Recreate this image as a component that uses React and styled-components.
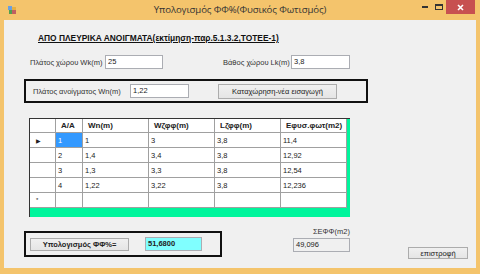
import React from 'react';
import styled, { createGlobalStyle } from 'styled-components';

const GlobalStyle = createGlobalStyle`
  * { margin: 0; padding: 0; box-sizing: border-box; }
  html, body { width: 480px; height: 274px; overflow: hidden; }
  body { font-family: "Liberation Sans", "DejaVu Sans", sans-serif; color: #222; }
`;

const Window = styled.div`
  width: 480px;
  height: 274px;
  background: #f4c46c;
  display: flex;
  flex-direction: column;
`;

const TitleBar = styled.div`
  height: 20px;
  display: grid;
  grid-template-columns: 1fr auto 1fr;
  align-items: start;
`;

const Title = styled.div`
  font-family: "Open Sans", "Noto Sans", sans-serif;
  font-size: 9.6px;
  letter-spacing: -0.1px;
  line-height: 20px;
  color: #333;
`;

const Controls = styled.div`
  display: flex;
  justify-content: flex-end;
  align-items: flex-start;
  padding-right: 5px;
`;

const CtrlBtn = styled.div`
  width: ${p => p.w || 14}px;
  height: 14px;
  display: flex;
  align-items: center;
  justify-content: center;
  background: ${p => p.close ? '#c75050' : 'transparent'};
`;

const Client = styled.div`
  flex: 1;
  margin: 0 4px 6px 4px;
  background: #f0f0f0;
  display: flex;
  flex-direction: column;
  padding-top: 13px;
`;

const Heading = styled.div`
  margin-left: 34px;
  font-size: 8.4px;
  font-weight: bold;
  line-height: 10px;
  text-decoration: underline;
  color: #111;
`;

const Row = styled.div`
  display: flex;
  align-items: center;
  margin-top: ${p => p.mt || 0}px;
  margin-left: ${p => p.ml || 0}px;
`;

const Label = styled.span`
  font-size: 7.5px;
  width: ${p => p.w}px;
  margin-left: ${p => p.ml || 0}px;
  white-space: nowrap;
  color: #333;
`;

const TextBox = styled.div`
  width: ${p => p.w}px;
  height: 14px;
  margin-left: ${p => p.ml || 0}px;
  background: ${p => p.bg || '#fff'};
  border: 1px solid #abadb3;
  font-size: 7.5px;
  font-weight: ${p => p.bold ? 'bold' : 'normal'};
  line-height: 12px;
  padding-left: 2px;
  color: #222;
`;

const Button = styled.div`
  width: ${p => p.w}px;
  height: ${p => p.h || 14}px;
  margin-left: ${p => p.ml || 0}px;
  margin-top: ${p => p.mt || 0}px;
  border: 1px solid #acacac;
  background: linear-gradient(#f0f0f0, #e5e5e5);
  font-size: 7.5px;
  font-weight: ${p => p.bold ? 'bold' : 'normal'};
  display: flex;
  align-items: center;
  justify-content: center;
  color: #222;
`;

const FrameBox = styled.div`
  border: 2px solid #111;
  width: ${p => p.w}px;
  height: ${p => p.h}px;
  margin-left: 20px;
  margin-top: ${p => p.mt || 0}px;
  display: flex;
  align-items: center;
  padding-left: ${p => p.pl || 0}px;
`;

const Grid = styled.div`
  margin: 15px 0 0 25px;
  width: 321px;
  height: 99px;
  background: #00f59c;
  border-top: 1px solid #333;
  border-left: 1px solid #333;
`;

const GridTable = styled.div`
  display: grid;
  grid-template-columns: 26px 27px 66px 66px 66px 66px;
  grid-auto-rows: 15px;
  grid-template-rows: 14px;
  background: #fff;
  width: 317px;
`;

const Cell = styled.div`
  border-right: 1px solid #a0a0a0;
  border-bottom: 1px solid #a0a0a0;
  font-size: ${p => p.head ? 8 : 7.5}px;
  font-weight: ${p => p.head ? 'bold' : 'normal'};
  padding-left: ${p => p.head ? 5 : 2}px;
  display: flex;
  align-items: center;
  background: ${p => p.sel ? '#3399ff' : '#fff'};
  color: ${p => p.sel ? '#fff' : '#222'};
  white-space: nowrap;
`;

const RowHead = styled(Cell)`
  padding-left: 6px;
  font-size: 6px;
`;

const BottomRow = styled.div`
  display: flex;
  align-items: flex-start;
  margin-top: 10px;
`;

const SumCol = styled.div`
  display: flex;
  flex-direction: column;
  align-items: flex-end;
  margin-left: 71px;
  gap: 2px;
`;

const rows = [
  ['1', '1', '3', '3,8', '11,4'],
  ['2', '1,4', '3,4', '3,8', '12,92'],
  ['3', '1,3', '3,3', '3,8', '12,54'],
  ['4', '1,22', '3,22', '3,8', '12,236'],
];

const headers = ['A/A', 'Wn(m)', 'Wζφφ(m)', 'Lζφφ(m)', 'Εφυσ.φωτ(m2)'];

const AppIcon = () => (
  <svg width="8" height="8" viewBox="0 0 8 8" style={{ margin: '6px 0 0 8px' }}>
    <rect x="0" y="0" width="4" height="4" fill="#6aa0e0" />
    <rect x="4" y="1" width="4" height="3" fill="#e8b040" />
    <rect x="1" y="4" width="3" height="4" fill="#50a050" />
    <rect x="4" y="4" width="4" height="4" fill="#c06060" />
  </svg>
);

export default function App() {
  return (
    <Window>
      <GlobalStyle />
      <TitleBar>
        <AppIcon />
        <Title>Υπολογισμός ΦΦ%(Φυσικός Φωτισμός)</Title>
        <Controls>
          <CtrlBtn w={14}>
            <svg width="6" height="2"><rect width="6" height="2" fill="#333" /></svg>
          </CtrlBtn>
          <CtrlBtn w={14}>
            <svg width="8" height="6"><rect x="0.5" y="0.5" width="7" height="5" fill="none" stroke="#333" /><rect x="0" y="0" width="8" height="2" fill="#333" /></svg>
          </CtrlBtn>
          <CtrlBtn w={29} close>
            <svg width="7" height="7"><path d="M1 1L6 6M6 1L1 6" stroke="#fff" strokeWidth="1.6" /></svg>
          </CtrlBtn>
        </Controls>
      </TitleBar>
      <Client>
        <Heading>ΑΠΟ ΠΛΕΥΡΙΚΑ ΑΝΟΙΓΜΑΤΑ(εκτίμηση-παρ.5.1.3.2,ΤΟΤΕΕ-1)</Heading>
        <Row mt={12} ml={26}>
          <Label w={75}>Πλάτος χώρου Wk(m)</Label>
          <TextBox w={58}>25</TextBox>
          <Label w={68} ml={60}>Βάθος χώρου Lk(m)</Label>
          <TextBox w={59}>3,8</TextBox>
        </Row>
        <FrameBox w={344} h={24} mt={10} pl={7}>
          <Label w={97}>Πλάτος ανοίγματος Wn(m)</Label>
          <TextBox w={59}>1,22</TextBox>
          <Button w={119} h={15} ml={29}>Καταχώρηση-νέα εισαγωγή</Button>
        </FrameBox>
        <Grid>
          <GridTable>
            <RowHead head />
            {headers.map(h => <Cell head key={h}>{h}</Cell>)}
            {rows.map((r, i) => (
              <React.Fragment key={i}>
                <RowHead>{i === 0 ? '▶' : ''}</RowHead>
                {r.map((v, j) => <Cell key={j} sel={i === 0 && j === 0}>{v}</Cell>)}
              </React.Fragment>
            ))}
            <RowHead>*</RowHead>
            {headers.map(h => <Cell key={h} />)}
          </GridTable>
        </Grid>
        <BottomRow>
          <FrameBox w={198} h={26} mt={4} pl={4}>
            <Button w={99} h={13} bold>Υπολογισμός ΦΦ%=</Button>
            <TextBox w={57} ml={16} bg="#80ffff" bold>51,6800</TextBox>
          </FrameBox>
          <SumCol>
            <Label>ΣΕΦΦ(m2)</Label>
            <TextBox w={57} bg="#f0f0f0">49,096</TextBox>
          </SumCol>
          <Button w={60} h={12} ml={58} mt={20}>επιστροφή</Button>
        </BottomRow>
      </Client>
    </Window>
  );
}
